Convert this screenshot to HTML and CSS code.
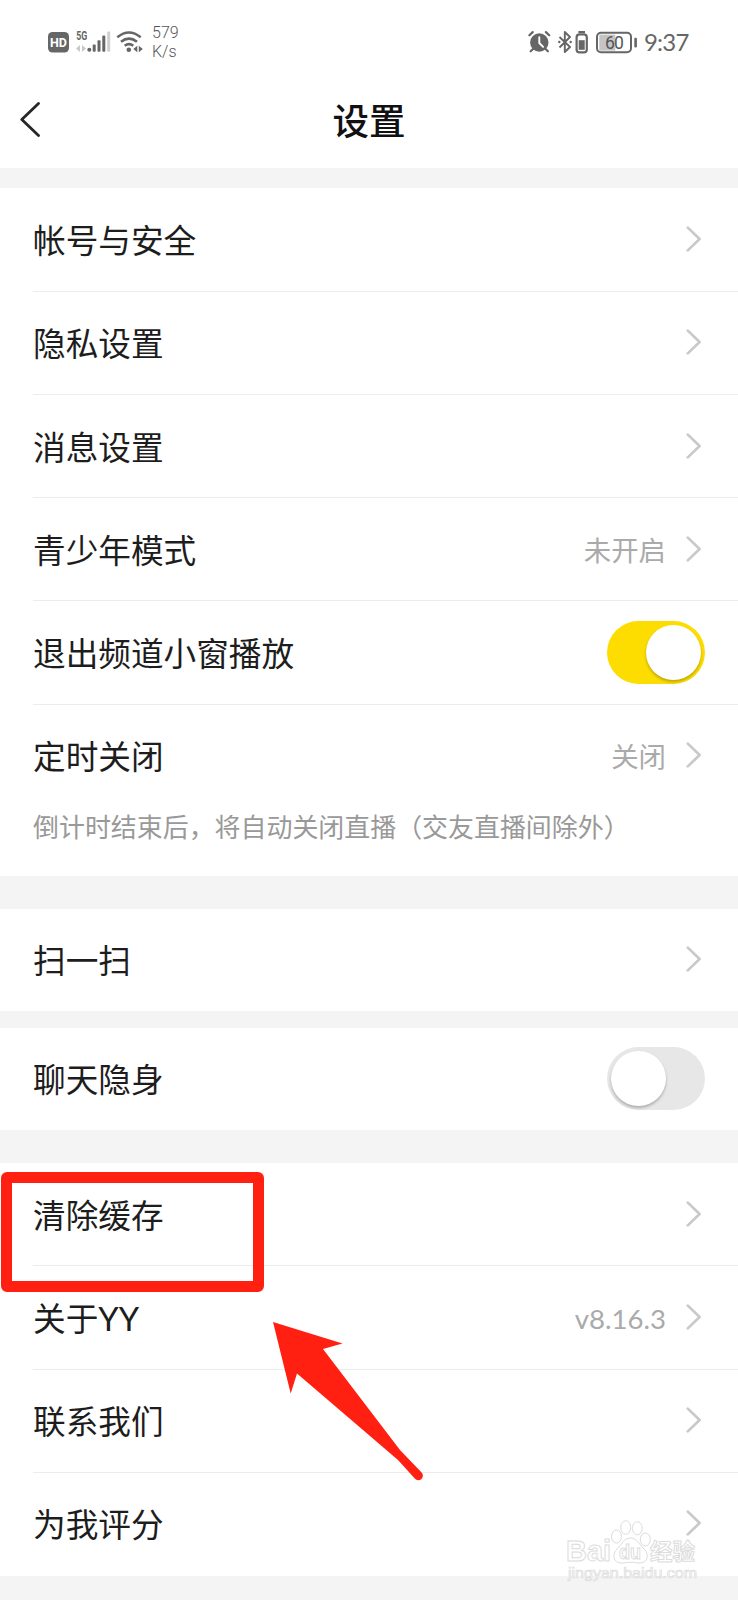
FILE: index.html
```html
<!DOCTYPE html>
<html lang="zh-CN">
<head>
  <meta charset="UTF-8" />
  <meta name="viewport" content="width=device-width, initial-scale=1.0" />
  <title>设置</title>
  <link rel="stylesheet" href="styles.css">
</head>
<body>

<svg class="defs" width="0" height="0">
  <symbol id="arrow" viewBox="0 0 16 26"><path d="M1.8 1.6 L13.6 13 L1.8 24.4" fill="none" stroke="#c9c9c9" stroke-width="2.7" stroke-linecap="round" stroke-linejoin="round"/></symbol>
</svg>

<div class="status-bar">
  <svg class="status-icons" width="96" height="30" viewBox="0 0 96 30">
    <rect x="0" y="5" width="21" height="20.5" rx="4.5" fill="#666"/>
    <text class="hd" x="10.5" y="20.2" text-anchor="middle">HD</text>
    <text class="net" x="28.3" y="13" textLength="11" lengthAdjust="spacingAndGlyphs">5G</text>
    <path d="M32 18v7l-4-3.5zM34 18v7l4-3.5z" fill="#c9c9c9"/>
    <g fill="#666">
      <circle cx="41.3" cy="22.8" r="2"/>
      <rect x="44.7" y="17.5" width="3" height="7.3" rx="1"/>
      <rect x="49.5" y="13.2" width="3" height="11.6" rx="1"/>
      <rect x="54.3" y="8.5" width="3" height="16.3" rx="1"/>
    </g>
    <rect x="59.2" y="4.5" width="3" height="20.3" rx="1" fill="#d0d0d0"/>
    <g fill="none" stroke="#666" stroke-width="2.6">
      <path d="M69.3 10.3q11.7-9.6 23.4 0"/>
      <path d="M73 14.7q8-6.2 16 0"/>
      <path d="M76.7 18.7q4.3-3 8.6 0"/>
    </g>
    <circle cx="80.8" cy="22.8" r="2.3" fill="#666"/>
    <path d="M89.3 18.8v6.4l-4-3.2zM90.8 18.8v6.4l4-3.2z" fill="#666"/>
  </svg>
  <div class="speed">579<br>K/s</div>
  <svg class="device-icons" width="110" height="26" viewBox="0 0 110 26">
    <circle cx="11.3" cy="13.5" r="9.2" fill="#666"/>
    <path d="M11.3 8.3v5.7l3.8 3.8" fill="none" stroke="#fff" stroke-width="1.9" stroke-linecap="round"/>
    <path d="M1.4 6.3l3.3-3.2M21.2 6.3l-3.3-3.2M5 20l-2.3 2.3M17.6 20l2.3 2.3" stroke="#666" stroke-width="2.2" stroke-linecap="round"/>
    <path d="M31.5 8l10.5 10-5.2 5V3l5.2 5-10.5 10.5" fill="none" stroke="#666" stroke-width="1.9" stroke-linejoin="round"/>
    <circle cx="31.3" cy="13" r="1.2" fill="#666"/><circle cx="42.7" cy="13" r="1.2" fill="#666"/>
    <rect x="50.4" y="2" width="6.6" height="2" fill="#666"/>
    <rect x="48.6" y="5.4" width="10.2" height="18" rx="3" fill="none" stroke="#666" stroke-width="2.2"/>
    <rect x="50.7" y="11.2" width="6" height="9.6" fill="#666"/>
    <rect x="71.3" y="5.6" width="16" height="16" fill="#c4c4c4"/>
    <rect x="69" y="3.8" width="34" height="19.4" rx="4" fill="none" stroke="#666" stroke-width="2"/>
    <rect x="106.3" y="8.8" width="2.6" height="9.8" rx="1" fill="#666"/>
    <text class="level" x="86" y="19.8" text-anchor="middle">60</text>
  </svg>
  <div class="clock">9:37</div>
</div>

<header>
  <svg class="back" width="22" height="36" viewBox="0 0 22 36"><path d="M18.5 2.5 L1.8 18.5 L18.5 34.5" fill="none" stroke="#262626" stroke-width="2.8" stroke-linecap="round" stroke-linejoin="round"/></svg>
  <h1>设置</h1>
</header>

<div class="group">
  <div class="row"><span>帐号与安全</span><svg class="arrow"><use href="#arrow"/></svg></div>
  <div class="row"><span>隐私设置</span><svg class="arrow"><use href="#arrow"/></svg></div>
  <div class="row"><span>消息设置</span><svg class="arrow"><use href="#arrow"/></svg></div>
  <div class="row"><span>青少年模式</span><span class="value">未开启</span><svg class="arrow"><use href="#arrow"/></svg></div>
  <div class="row"><span>退出频道小窗播放</span><div class="switch on"><i></i></div></div>
  <div class="row last"><span>定时关闭</span><span class="value">关闭</span><svg class="arrow"><use href="#arrow"/></svg></div>
  <p class="note">倒计时结束后，将自动关闭直播（交友直播间除外）</p>
</div>

<div class="group scan">
  <div class="row last"><span>扫一扫</span><svg class="arrow"><use href="#arrow"/></svg></div>
</div>

<div class="group chat">
  <div class="row last"><span>聊天隐身</span><div class="switch"><i></i></div></div>
</div>

<div class="group about">
  <div class="row"><span>清除缓存</span><svg class="arrow"><use href="#arrow"/></svg></div>
  <div class="row"><span>关于<b>YY</b></span><span class="value version">v8.16.3</span><svg class="arrow"><use href="#arrow"/></svg></div>
  <div class="row"><span>联系我们</span><svg class="arrow"><use href="#arrow"/></svg></div>
  <div class="row last"><span>为我评分</span><svg class="arrow"><use href="#arrow"/></svg></div>
</div>

<!-- marks over the list -->
<div class="mark-box"></div>
<svg class="mark-arrow" width="160" height="170" viewBox="0 0 160 170">
  <path d="M3 2 L72.5 23.5 L53 29 L130 130 L151.6 152.5 A4.4 4.4 0 0 1 145 158.8 L128 140 L27 53.5 L20.7 73.5 Z" fill="#ff2011"/>
</svg>

<svg class="watermark" width="140" height="70" viewBox="0 0 140 70">
  <g class="outline">
    <text class="brand" x="2" y="42" textLength="45" lengthAdjust="spacingAndGlyphs">Bai</text>
    <ellipse cx="52.5" cy="17.5" rx="5" ry="6.5"/>
    <ellipse cx="61.7" cy="8.5" rx="5" ry="6.7"/>
    <ellipse cx="73.3" cy="9.3" rx="5" ry="6.5"/>
    <ellipse cx="81.3" cy="20.5" rx="5" ry="6.5"/>
    <path d="M66.5 19 C73 19 75 25 80 30 C87 37 82 45 74 44 C69 43 65 43 60 44 C50 45 47 37 53 30 C58 25 60 19 66.5 19Z"/>
    <text class="du" x="55" y="40" textLength="22" lengthAdjust="spacingAndGlyphs">du</text>
    <text class="jy" x="86" y="41" textLength="45" lengthAdjust="spacingAndGlyphs">经验</text>
    <text class="site" x="4" y="59" textLength="129" lengthAdjust="spacingAndGlyphs">jingyan.baidu.com</text>
  </g>
</svg>

</body>
</html>
```

FILE: styles.css
```css
* { box-sizing: border-box; }
body { margin: 0; width: 738px; height: 1600px; overflow: hidden; position: relative; background: #f4f4f4; color: #1d1d1d; font-family: "Noto Sans CJK SC", sans-serif; }
svg { display: block; flex: none; }
.defs { position: absolute; }

.status-bar { height: 84px; background: #fff; display: flex; align-items: center; padding: 0 48px; color: #666; font-family: Roboto, sans-serif; }
.speed { margin: 0 auto 0 8px; font-size: 16px; line-height: 19px; font-weight: 300; color: #555; }
.hd { font: 700 12.5px Roboto, sans-serif; fill: #fff; }
.net { font: 700 12px Roboto, sans-serif; fill: #666; }
.level { font: 400 17.5px Roboto, sans-serif; letter-spacing: -0.9px; fill: #555; }
.clock { margin-left: 6px; width: 46px; font: 400 24px/30px Lato, sans-serif; letter-spacing: -0.8px; white-space: nowrap; }

header { height: 84.4px; background: #fff; display: flex; align-items: center; padding: 0 20px 14px; }
h1 { flex: 1; margin: 2px 22px 0 0; text-align: center; font-size: 36.5px; line-height: 50px; font-weight: 500; color: #111; }

.group { background: #fff; margin-top: 20.1px; padding-left: 33px; overflow: hidden; }
.row { height: 103.25px; border-bottom: 1px solid #ececec; padding: 0 36px 1px 0; display: flex; align-items: center; font-size: 32.65px; line-height: 46px; }
.row.last { border-bottom: none; padding-bottom: 2px; }
.row > span:first-child { margin-right: auto; }
.row b { font-family: Lato, sans-serif; font-weight: 400; line-height: 1; }
.value { margin-right: 20px; font-size: 27.4px; color: #aaa; }
.value.version { font-family: Lato, sans-serif; font-size: 27.6px; padding-top: 4px; }
.arrow { width: 16px; height: 26px; }
.note { margin: 0; height: 67.7px; font-size: 25.95px; line-height: 36px; color: #999; white-space: nowrap; }
.scan { margin-top: 33px; }
.chat { margin-top: 16.4px; }
.about { margin-top: 33px; }
.scan .row, .chat .row { height: 102.5px; }

.switch { width: 98px; height: 63px; margin: 1px -3px 0 0; border-radius: 32px; background: #e7e7e7; padding: 4px; display: flex; }
.switch i { width: 55px; height: 55px; border-radius: 50%; background: #fff; box-shadow: 0 2px 3px rgba(0, 0, 0, 0.25); }
.switch.on { background: #fddd00; justify-content: flex-end; }

.mark-box { position: absolute; left: 0.6px; top: 1172px; width: 263.5px; height: 120px; border: 11.5px solid #ff2011; border-radius: 6px; }
.mark-arrow { position: absolute; left: 270px; top: 1320px; }

.watermark { position: absolute; left: 564px; top: 1519px; }
.outline { fill: #fff; stroke: #dcdcdc; stroke-width: 1; }
.brand { font: 700 30px "Liberation Sans", sans-serif; }
.du { font: 700 20px "Liberation Sans", sans-serif; }
.jy { font: 700 23px "Noto Sans CJK SC", sans-serif; }
.site { font: 400 14.5px "Liberation Sans", sans-serif; stroke-width: 0.7; }
```
